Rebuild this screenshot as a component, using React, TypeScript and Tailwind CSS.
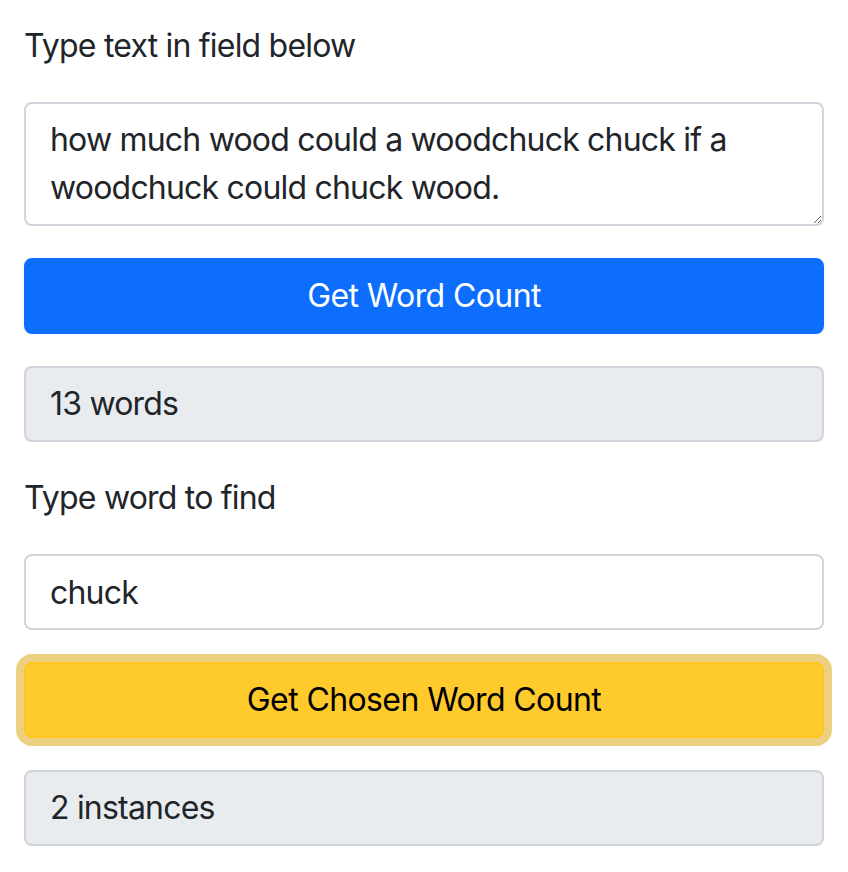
import React from "react";

export default function App() {
  const font = { fontFamily: "Inter, 'Noto Sans', sans-serif" };
  return (
    <div className="w-[848px] min-h-[872px] bg-white text-[#212529] tracking-[-0.8px]" style={font}>
      <div className="flex flex-col gap-8 px-6 pt-[22px] pb-6">
        <label className="text-[32px] leading-[48px]">Type text in field below</label>
        <textarea
          className="block w-full h-[124px] rounded-[8px] border-2 border-[#ced4da] bg-white px-6 py-3 text-[32px] leading-[48px] tracking-[-0.8px] text-[#212529] outline-none resize-y"
          defaultValue="how much wood could a woodchuck chuck if a woodchuck could chuck wood."
        />
        <button className="w-full h-[76px] rounded-[8px] border-2 border-[#0d6efd] bg-[#0d6efd] text-[32px] leading-[48px] tracking-[-0.6px] text-white">
          Get Word Count
        </button>
        <div className="h-[76px] rounded-[8px] border-2 border-[#ced4da] bg-[#e9ecef] px-6 py-3 text-[32px] leading-[48px]">
          13 words
        </div>
        <label className="text-[32px] leading-[48px]">Type word to find</label>
        <input
          className="block w-full h-[76px] rounded-[8px] border-2 border-[#ced4da] bg-white px-6 py-3 text-[32px] leading-[48px] tracking-[-0.8px] text-[#212529] outline-none"
          defaultValue="chuck"
        />
        <button className="w-full h-[76px] rounded-[8px] border-2 border-[#ffc720] bg-[#ffca2c] text-[32px] leading-[48px] tracking-[-0.6px] text-black shadow-[0_0_0_8px_rgba(217,164,6,0.5)]">
          Get Chosen Word Count
        </button>
        <div className="h-[76px] rounded-[8px] border-2 border-[#ced4da] bg-[#e9ecef] px-6 py-3 text-[32px] leading-[48px]">
          2 instances
        </div>
      </div>
    </div>
  );
}
